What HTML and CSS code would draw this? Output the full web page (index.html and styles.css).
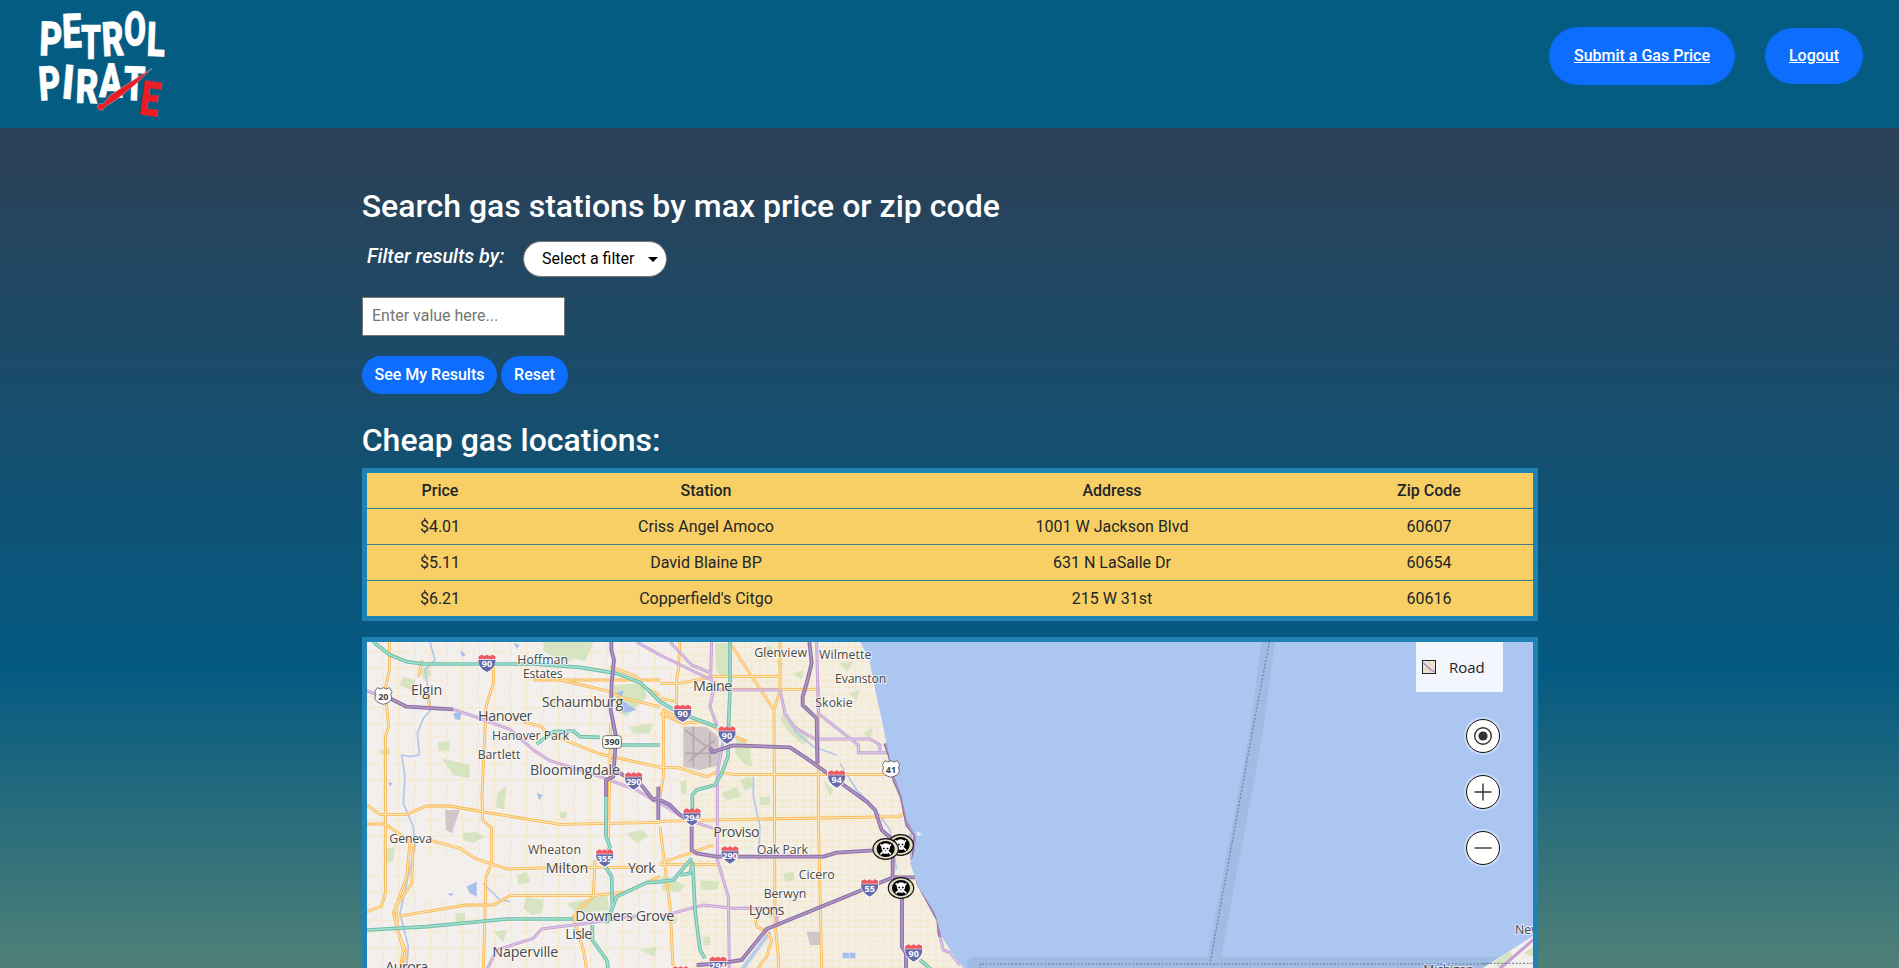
FILE: index.html
```html
<!DOCTYPE html>
<html lang="en">
<head>
<meta charset="utf-8">
<title>Petrol Pirate</title>
<link rel="stylesheet" href="styles.css">
</head>
<body>
<header class="site-header">
  <svg class="logo" viewBox="0 0 540 384" role="img" aria-label="Petrol Pirate">
    <g class="logo-letters">
      <text transform="translate(117 166) rotate(2)" textLength="68" lengthAdjust="spacingAndGlyphs">P</text>
      <text transform="translate(188 144) rotate(-2)" textLength="58" lengthAdjust="spacingAndGlyphs">E</text>
      <text transform="translate(243 177) rotate(0)" textLength="60" lengthAdjust="spacingAndGlyphs">T</text>
      <text transform="translate(308 169) rotate(-3)" textLength="66" lengthAdjust="spacingAndGlyphs">R</text>
      <text transform="translate(371 136) rotate(1)" textLength="66" lengthAdjust="spacingAndGlyphs">O</text>
      <text transform="translate(439 167) rotate(2)" textLength="55" lengthAdjust="spacingAndGlyphs">L</text>
      <text transform="translate(119 302) rotate(-4)" textLength="66" lengthAdjust="spacingAndGlyphs">P</text>
      <text transform="translate(183 295) rotate(5)" textLength="35" lengthAdjust="spacingAndGlyphs">I</text>
      <text transform="translate(226 308) rotate(2)" textLength="68" lengthAdjust="spacingAndGlyphs">R</text>
      <text transform="translate(297 291) rotate(1)" textLength="70" lengthAdjust="spacingAndGlyphs">A</text>
      <text transform="translate(370 300) rotate(2)" textLength="64" lengthAdjust="spacingAndGlyphs">T</text>
      <text class="logo-red" transform="translate(415 342) rotate(8)" textLength="58" lengthAdjust="spacingAndGlyphs">E</text>
    </g>
    <path class="logo-sword" d="M457 205 L396 243 L330 286 L309 312 A11 10 0 1 0 314 322 L348 300 L405 254 Z"/>
  </svg>
  <nav class="site-nav">
    <a class="pill pill-submit" href="#">Submit a Gas Price</a>
    <a class="pill pill-logout" href="#">Logout</a>
  </nav>
</header>

<main class="content">
  <h2 class="title">Search gas stations by max price or zip code</h2>
  <div class="filter-row">
    <label class="filter-label" for="filter">Filter results by:</label>
    <span class="select-wrap">
      <select class="select" id="filter"><option>Select a filter</option></select>
      <svg class="caret" viewBox="0 0 10 5"><path d="M0 0H10L5 5Z"/></svg>
    </span>
  </div>
  <input class="value-input" type="text" placeholder="Enter value here...">
  <div class="actions">
    <button class="btn btn-results">See My Results</button>
    <button class="btn btn-reset">Reset</button>
  </div>
  <h2 class="title title-list">Cheap gas locations:</h2>
  <table class="prices">
    <colgroup><col class="col-price"><col class="col-station"><col class="col-address"><col class="col-zip"></colgroup>
    <thead><tr><th>Price</th><th>Station</th><th>Address</th><th>Zip Code</th></tr></thead>
    <tbody>
      <tr><td>$4.01</td><td>Criss Angel Amoco</td><td>1001 W Jackson Blvd</td><td>60607</td></tr>
      <tr><td>$5.11</td><td>David Blaine BP</td><td>631 N LaSalle Dr</td><td>60654</td></tr>
      <tr><td>$6.21</td><td>Copperfield's Citgo</td><td>215 W 31st</td><td>60616</td></tr>
    </tbody>
  </table>

  <div class="map">
    <svg class="map-canvas" viewBox="21 36 3498 978">
      <defs>
        <pattern id="streets-west" width="96" height="84" patternUnits="userSpaceOnUse">
          <path class="street" d="M20 0V84M0 30H96M64 0V30L70 50V84M0 66H64"/>
        </pattern>
        <pattern id="streets-east" width="66" height="60" patternUnits="userSpaceOnUse">
          <path class="street" d="M12 0V60M0 14H66M34 0V60M0 34H66M54 14V60M0 52H54"/>
        </pattern>
        <clipPath id="land-clip"><path d="M0 0H1440L1500 36L1528 90L1545 180L1565 270L1580 345L1600 430L1625 500L1640 570L1668 620L1664 665L1650 700L1675 770L1725 850L1745 920L1785 985L1815 1020H0Z"/></clipPath>
        <g id="roads-orange">
          <path d="M88 30V120L75 180L86 290L76 320V790L64 830L20 845M187 90L175 140M400 110V160L378 230L366 500L368 570L395 595V700L378 740L370 1020M520 150H900M600 150L750 185L790 205L900 230M750 110L830 140L850 170L900 195M490 275L545 290L560 310L640 340L720 372L900 412M20 525L60 553H140L200 528H270L370 546L600 583L900 577M20 582H76L150 635L140 740L100 850L130 960L120 1020M160 640L155 760L108 830L112 900L140 970L125 1020M200 628L300 655L345 685L440 717L600 712H840M108 860L320 825H400L450 797H700L800 785L900 740M705 690L700 800L665 830L640 860L670 960L680 1020M752 280L745 640M200 190L210 235"/>
          <path transform="translate(900 0)" d="M60 30L55 120L50 150V260L10 240V440L0 500M0 160H60L160 140H360M0 205L50 215M210 40L345 245M360 30V180L350 215L342 240L345 880L355 980V1020M210 178H470M0 250L70 280L130 275L180 300L260 335M0 412H50L140 440L170 425L220 433H690M0 574L240 568L720 560L730 550M475 170V560L480 780L485 1020M0 700L160 645M0 704H170M0 590L30 830L40 1020M285 860L290 890L320 905L335 930L320 980L290 1020"/>
        </g>
        <g id="roads-lilac">
          <path d="M20 182L80 205M280 238L330 255L450 298L520 360L570 392L720 440L830 480L900 522M830 36L900 75M380 1020L410 960L520 925L545 897L690 878L830 858"/>
          <path transform="translate(900 0)" d="M0 75L155 150M30 36L95 105L155 130M155 30L152 140L160 180L150 230L172 290L190 330L172 430V690L205 800L208 1020M160 180H360L375 250L400 290L465 327H630L660 345V365M470 36L475 250L595 345V368H680M0 520L80 568L160 595M0 860L130 825L220 835H350L352 890M752 610L755 690M835 900L850 960L870 968L900 1005"/>
        </g>
        <g id="roads-violet">
          <path d="M80 200L140 230L280 238M754 30V60L762 90L755 160L752 240L768 320L760 440L738 450V500M770 425L840 460L880 510L900 500M895 470V570"/>
          <path transform="translate(900 0)" d="M0 510L30 525L60 555L95 575V660L110 670L170 680H490L530 668L640 661L690 655M150 352L158 366L220 346L390 352L440 385L530 450L620 515L645 540L665 600L698 630V740M448 36L455 100L440 160L428 200V225L470 265L472 400M676 340L690 380L703 450L725 500L742 585L766 615L760 690L775 760L835 870L840 920M765 742H700L320 897L245 990L180 1000L110 1005M726 770V950L738 970V1020"/>
        </g>
        <g id="roads-teal">
          <path d="M40 36L90 75L140 95L190 102H520L660 112L770 130L840 158L870 185L900 215M530 342L580 305L640 303L660 320L720 322M780 345H900M738 495V620L750 650L730 700L755 740L757 830M20 900L200 890L440 867H640M740 880L770 800L860 758L900 756M697 885V930L740 990L745 1020"/>
          <path transform="translate(900 0)" d="M0 215L60 250L170 290M210 36V180L205 300L204 380L185 430L165 465L110 480L97 495V560M0 755L40 750L95 685M60 735L90 730L98 700L105 840L120 960L135 985M780 990L815 1020"/>
        </g>
        <g id="interstate">
          <path class="shield-rim" d="M-28 -27Q0 -20 28 -27Q32 14 0 30Q-32 14 -28 -27Z"/>
          <path class="shield-body" d="M-26 -11H26Q27 13 0 26Q-27 13 -26 -11Z"/>
          <path class="shield-top" d="M-25 -22L-15 -26L-8 -22L0 -26L8 -22L15 -26L25 -22L26 -13H-26Z"/>
        </g>
        <g id="us-route"><path class="us-shield" d="M-18 -25L-9 -21L0 -25L9 -21L18 -25L26 -13Q19 -5 25 5Q26 18 0 25Q-26 18 -25 5Q-19 -5 -26 -13Z"/></g>
        <g id="pirate-pin">
          <ellipse class="pin-ring" rx="38" ry="31"/>
          <ellipse class="pin-disc" rx="27" ry="24"/>
          <path class="pin-bones" d="M-16 -14L16 16M16 -14L-16 16"/>
          <path class="pin-skull" d="M-13 -5Q-12 -17 0 -17Q12 -17 13 -5Q13 4 7 6V14H-7V6Q-13 4 -13 -5Z"/>
          <path class="pin-eyes" d="M-8 -4H-3V1H-8ZM3 -4H8V1H3ZM-1.500 4H1.500V7H-1.500Z"/>
        </g>
      </defs>

      <rect class="water" width="3540" height="1020"/>
      <path class="strait" d="M2725 30L2690 300L2560 1000M1842 1020V1000H3530"/>
      <path class="border-line" d="M2728 36L2680 290L2551 996M1860 1018V1002H3520"/>
      <g clip-path="url(#land-clip)">
        <rect class="land" width="1900" height="1020"/>
        <rect class="land-east" x="960" width="940" height="1020"/>
        <rect fill="url(#streets-west)" width="960" height="1020"/>
        <rect fill="url(#streets-east)" x="960" width="940" height="1020"/>
        <rect class="land" x="170" y="690" width="190" height="120"/>
        <path class="park" d="M550 36H700L675 95L640 85L620 100L552 65ZM245 385L328 405L330 445L280 435ZM235 335H268V362H235ZM760 165L850 160L860 200L800 260L765 240ZM412 490L440 465L432 540L408 530ZM310 610L350 605L375 620L340 640L310 630ZM470 735L500 725L510 755L475 765ZM500 800L550 810L545 850L515 855L490 835ZM620 820L740 795L750 840L650 850ZM130 140L165 150L160 185L120 165ZM450 260L480 255L470 280ZM60 360L90 355V375H65ZM600 545H620V565H600ZM70 660L105 650L100 690L85 700ZM400 905L440 900L430 935ZM800 610L850 600L865 620L830 640ZM840 960L890 950L885 980ZM180 120L205 105L215 135L190 150ZM810 290L880 280L870 310L820 312ZM285 850H315V880H290ZM545 205L590 215L570 235Z"/>
        <path class="park" transform="translate(900 0)" d="M165 40L210 40V150L170 125ZM230 320L270 345L275 410L250 400L225 370ZM372 245L410 285L445 325L430 345L390 310L360 270ZM300 60L330 45L345 70L310 90ZM5 735L75 765L60 785L5 780ZM185 490L230 470L245 500L200 510ZM60 455L80 450V490L65 495ZM240 450L270 440L285 470L255 480ZM540 100L580 95L560 125ZM400 130L430 120L425 150ZM490 450L520 480L510 500ZM300 500H330V525H300ZM120 750L180 755L170 780H125ZM370 730L400 725L405 750L375 755ZM320 840L350 850L330 870ZM130 920H150V945H130ZM565 190L600 180L590 210ZM610 310L640 290L630 330ZM750 680L775 690L780 740L765 740ZM640 745L665 750L660 765L645 765ZM350 90L370 100L360 130ZM20 860H50V880H20Z"/>
        <path class="creek" d="M210 36L225 90L195 120L205 180L212 240L190 265L172 310L178 375L150 380L125 375L135 440L130 520L160 590L165 650L140 760L120 850L145 950L140 1020M1440 400L1490 480L1540 530L1590 600L1610 720M1180 440V500L1200 590L1195 690M1300 300L1360 350L1430 375M370 760L420 810L450 815"/>
        <path class="pond" d="M280 250L305 245L300 270L285 268ZM320 770L350 755V800L330 790ZM262 792L280 788L275 798ZM770 190L790 180L785 210L830 240L790 250ZM300 60L318 75L306 80ZM462 38L478 46L470 56ZM85 455L97 460L90 470ZM530 490L548 495L538 510ZM1448 968H1468V985H1448ZM1470 968H1486V985H1470Z"/>
        <path class="airport" d="M970 290H1040L1075 320L1080 405L1020 420L970 410ZM1340 905H1380V945H1350ZM255 540H300L275 610L258 600Z"/>
        <path class="runway" d="M975 300L1040 350M985 395L1065 330M1000 290V410M975 370H1070M1050 310V410"/>
        <path class="canal" d="M1230 905L1145 1020"/>
        <use href="#roads-orange" class="orange-case"/><use href="#roads-orange" class="orange-core"/>
        <use href="#roads-lilac" class="lilac-case"/><use href="#roads-lilac" class="lilac-core"/>
        <use href="#roads-teal" class="teal-case"/><use href="#roads-teal" class="teal-core"/>
        <use href="#roads-violet" class="violet-case"/><use href="#roads-violet" class="violet-core"/>
      </g>
      <path class="land" d="M1672 605L1685 608L1675 611L1690 614L1672 617Z"/>
      <path class="land" d="M3368 1014L3519 918V1014Z"/>
      <path class="park" d="M3400 998L3450 960L3460 985L3420 1014ZM3490 970L3519 950V980Z"/>
      <path class="lilac-case" d="M3415 1020L3525 925"/>
      <path class="border-line" d="M3368 1000H3519"/>

      <g class="labels">
        <text class="big" x="153" y="195" textLength="94">Elgin</text>
        <text x="472" y="101" textLength="152">Hoffman</text>
        <text x="489" y="143" textLength="119">Estates</text>
        <text class="big" x="545" y="231" textLength="245">Schaumburg</text>
        <text class="big" x="354" y="272" textLength="163">Hanover</text>
        <text x="396" y="330" textLength="232">Hanover Park</text>
        <text x="353" y="387" textLength="128">Bartlett</text>
        <text class="big" x="510" y="435" textLength="270">Bloomingdale</text>
        <text x="88" y="639" textLength="128">Geneva</text>
        <text x="504" y="671" textLength="159">Wheaton</text>
        <text class="big" x="557" y="729" textLength="128">Milton</text>
        <text class="big" x="804" y="729" textLength="83">York</text>
        <text class="big" x="646" y="872" textLength="297">Downers Grove</text>
        <text class="big" x="616" y="926" textLength="81">Lisle</text>
        <text class="big" x="397" y="980" textLength="198">Naperville</text>
        <text class="big" x="76" y="1026" textLength="129">Aurora</text>
        <text x="1183" y="81" textLength="158">Glenview</text>
        <text x="1377" y="86" textLength="157">Wilmette</text>
        <text x="1425" y="159" textLength="154">Evanston</text>
        <text x="1366" y="230" textLength="112">Skokie</text>
        <text class="big" x="999" y="182" textLength="118">Maine</text>
        <text class="big" x="1060" y="620" textLength="139">Proviso</text>
        <text x="1190" y="672" textLength="154">Oak Park</text>
        <text x="1316" y="747" textLength="108">Cicero</text>
        <text x="1211" y="804" textLength="128">Berwyn</text>
        <text class="big" x="1166" y="854" textLength="107">Lyons</text>
        <text x="3465" y="912">New</text>
        <text x="3190" y="1033" textLength="150">Michigan</text>
      </g>

      <g class="shields">
        <g transform="translate(381 100)"><use href="#interstate"/><text y="11">90</text></g>
        <g transform="translate(821 453)"><use href="#interstate"/><text y="12">290</text></g>
        <g transform="translate(734 684)"><use href="#interstate"/><text y="12">355</text></g>
        <g transform="translate(968 250)"><use href="#interstate"/><text y="11">90</text></g>
        <g transform="translate(1101 315)"><use href="#interstate"/><text y="12">90</text></g>
        <g transform="translate(1430 447)"><use href="#interstate"/><text y="12">94</text></g>
        <g transform="translate(996 561)"><use href="#interstate"/><text y="12">294</text></g>
        <g transform="translate(1110 675)"><use href="#interstate"/><text y="12">290</text></g>
        <g transform="translate(1529 774)"><use href="#interstate"/><text y="12">55</text></g>
        <g transform="translate(1661 969)"><use href="#interstate"/><text y="12">90</text></g>
        <g transform="translate(1074 1006)"><use href="#interstate"/><text y="12">294</text></g>
        <g transform="translate(962 1035)"><use href="#interstate"/></g>
        <g class="dark" transform="translate(70 198)"><use href="#us-route"/><text y="11">20</text></g>
        <g class="dark" transform="translate(1593 417)"><use href="#us-route"/><text y="12">41</text></g>
        <g class="dark" transform="translate(756 336)"><rect class="us-shield" x="-28" y="-19" width="56" height="38" rx="9"/><text y="9">390</text></g>
      </g>
      <use href="#pirate-pin" x="1622" y="645"/>
      <use href="#pirate-pin" x="1577" y="657"/>
      <use href="#pirate-pin" x="1623" y="774"/>
    </svg>

    <div class="map-tools">
      <div class="map-type">
        <svg class="map-type-icon" viewBox="0 0 14 14"><rect x=".5" y=".5" width="13" height="13"/><path class="thumb-street" d="M5 1L13 9M1 9H8V13"/><path class="thumb-road" d="M1 3C4 4 6 9 13 12"/></svg>
        <span>Road</span>
      </div>
      <div class="map-buttons">
        <button class="round" aria-label="Locate me"><svg viewBox="0 0 18 18"><circle class="line" cx="9" cy="9" r="8.3"/><circle cx="9" cy="9" r="4.6"/></svg></button>
        <button class="round" aria-label="Zoom in"><svg viewBox="0 0 18 18"><path class="line" d="M9 .5V17.5M.5 9H17.5"/></svg></button>
        <button class="round" aria-label="Zoom out"><svg viewBox="0 0 18 18"><path class="line" d="M.5 9H17.5"/></svg></button>
      </div>
    </div>
  </div>
</main>
</body>
</html>
```
FILE: styles.css
```css
* { box-sizing: border-box; }
body {
  margin: 0;
  height: 968px;
  overflow: hidden;
  font-family: Roboto, sans-serif;
  font-size: 16px;
  line-height: 24px;
  color: #212529;
  background: linear-gradient(#2c4056 128px, #045a82 669px, #4f8077 968px);
}

.site-header {
  display: flex;
  justify-content: space-between;
  height: 128px;
  padding-right: 36px;
  background: #055c82;
}
.logo { width: 180px; height: 128px; overflow: visible; }
.logo-letters {
  font: 900 143px Roboto, sans-serif;
  fill: #fff;
  stroke: #fff;
  stroke-width: 2;
}
.logo-red { fill: #ec1c24; stroke: #ec1c24; }
.logo-sword { fill: #ec1c24; stroke: #a9b9c6; stroke-width: 1.5; }

.site-nav { display: flex; gap: 30px; height: 112px; align-items: center; }
.pill {
  display: flex;
  align-items: center;
  justify-content: center;
  border-radius: 30px;
  background: #0d6efd;
  color: #fff;
  font-weight: 500;
  text-decoration: underline;
}
.pill-submit { width: 186px; height: 58px; }
.pill-logout { width: 98px; height: 56px; }

.content { width: 1176px; margin-left: 362px; padding-top: 59px; }
.title {
  margin: 0 0 0 -0.3px;
  font-size: 32px;
  font-weight: 500;
  line-height: 38px;
  color: #fff;
  white-space: nowrap;
}
.filter-row { display: flex; height: 36px; margin-top: 16px; padding-left: 5px; }
.filter-label {
  width: 156px;
  padding-top: 4px;
  font-size: 19.8px;
  font-weight: 500;
  font-style: italic;
  color: #fff;
  white-space: nowrap;
}
.select-wrap { position: relative; width: 144px; }
.select {
  appearance: none;
  width: 144px;
  height: 36px;
  padding: 0 0 1px 18px;
  border: 1px solid #767676;
  border-radius: 18px;
  background: #fff;
  color: #000;
  font: 400 16px Roboto, sans-serif;
}
.caret { position: absolute; right: 9px; top: 16px; width: 10px; height: 5px; }
.value-input {
  display: block;
  width: 203px;
  height: 39px;
  margin-top: 20px;
  padding: 0 9px 3px;
  border: 1px solid #767676;
  border-radius: 0;
  background: #fff;
  font: 400 16px Roboto, sans-serif;
}
.value-input::placeholder { color: #757575; opacity: 1; }
.actions { display: flex; gap: 4px; margin-top: 20px; }
.btn {
  height: 38px;
  padding: 0 0 1px;
  border: 0;
  border-radius: 19px;
  background: #0d6efd;
  color: #fff;
  font: 500 16px Roboto, sans-serif;
}
.btn-results { width: 135px; }
.btn-reset { width: 67px; }
.title-list { margin-top: 27px; }

.prices {
  width: 1176px;
  margin-top: 9px;
  table-layout: fixed;
  border: 5px solid #1f82b4;
  border-collapse: separate;
  border-spacing: 0;
  background: #f7cf65;
  text-align: center;
}
.col-price { width: 146px; }
.col-station { width: 386px; }
.col-address { width: 426px; }
.col-zip { width: 208px; }
.prices th, .prices td { height: 36px; padding: 0; border-bottom: 1px solid #3e7c86; }
.prices th { font-weight: 500; }
.prices tbody tr:last-child td { height: 35px; border-bottom: 0; }

.map { position: relative; margin-top: 16px; border: 5px solid #1f82b4; border-bottom: 0; }
.map-canvas { display: block; width: 1166px; height: 326px; }
.map-canvas path { stroke-linejoin: round; }
.water { fill: #abc6f1; }
.strait { fill: none; stroke: #a0bce3; stroke-width: 40; }
.border-line { fill: none; stroke: #66759a; stroke-width: 3; stroke-dasharray: 6 5; }
.land { fill: #f2efec; }
.land-east { fill: #f3efe4; }
.street { fill: none; stroke: #f8e3bd; stroke-width: 2.2; }
.park { fill: #cfe1b8; opacity: .8; }
.creek { fill: none; stroke: #b3c7ea; stroke-width: 5; }
.pond { fill: #a4bfee; }
.airport { fill: #d0c6c8; }
.runway { fill: none; stroke: #b5a8ae; stroke-width: 5; }
.canal { fill: none; stroke: #b9cdec; stroke-width: 12; }
.orange-case, .orange-core, .lilac-case, .lilac-core, .teal-case, .teal-core, .violet-case, .violet-core { fill: none; }
.orange-case { stroke: #f9b64e; stroke-width: 8.5; }
.orange-core { stroke: #fee6b5; stroke-width: 3.5; }
.lilac-case { stroke: #c39fd3; stroke-width: 9; }
.lilac-core { stroke: #dcc5e8; stroke-width: 4; }
.teal-case { stroke: #6dbda9; stroke-width: 11; }
.teal-core { stroke: #a2ded0; stroke-width: 5; }
.violet-case { stroke: #8c6ea6; stroke-width: 11.5; }
.violet-core { stroke: #b196c4; stroke-width: 5; }

.labels {
  font: 400 37px "Open Sans", "Noto Sans", sans-serif;
  fill: #48484a;
  stroke: #fff;
  stroke-opacity: .65;
  stroke-width: 6;
  paint-order: stroke;
}
.big { font-size: 43px; }
.shields { font: 700 27px "Open Sans", sans-serif; fill: #fff; text-anchor: middle; }
.shield-rim { fill: #fff; }
.shield-body { fill: #666aa8; }
.shield-top { fill: #ee5a62; }
.us-shield { fill: #fff; stroke: #555; stroke-width: 2.5; }
.dark { fill: #444; }
.pin-ring { fill: #e2dcc4; stroke: #111; stroke-width: 3.5; }
.pin-disc { fill: #000; }
.pin-bones { fill: none; stroke: #fff; stroke-width: 5; }
.pin-skull { fill: #fff; }
.pin-eyes { fill: #000; }

.map-tools { position: absolute; top: 0; right: 30px; width: 87px; }
.map-type {
  display: flex;
  align-items: center;
  gap: 13px;
  height: 50px;
  padding-left: 6px;
  background: #f3f6fd;
  font: 400 15px "Open Sans", "Noto Sans", sans-serif;
  color: #222;
}
.map-type-icon { width: 14px; height: 14px; }
.map-type-icon rect { fill: #eee3d4; stroke: #222; }
.thumb-street { fill: none; stroke: #c8d8a8; }
.thumb-road { fill: none; stroke: #b98bc6; stroke-width: 1.6; }
.map-buttons { display: flex; flex-direction: column; align-items: flex-end; gap: 22px; padding: 27px 3px 0 0; }
.round {
  display: flex;
  align-items: center;
  justify-content: center;
  width: 34px;
  height: 34px;
  padding: 0;
  border: 1px solid #111;
  border-radius: 50%;
  background: #fff;
  box-shadow: 0 0 0 2px rgba(255, 255, 255, .35);
}
.round svg { width: 18px; height: 18px; fill: #333; }
.round .line { fill: none; stroke: #333; stroke-width: 1.4; }
```
